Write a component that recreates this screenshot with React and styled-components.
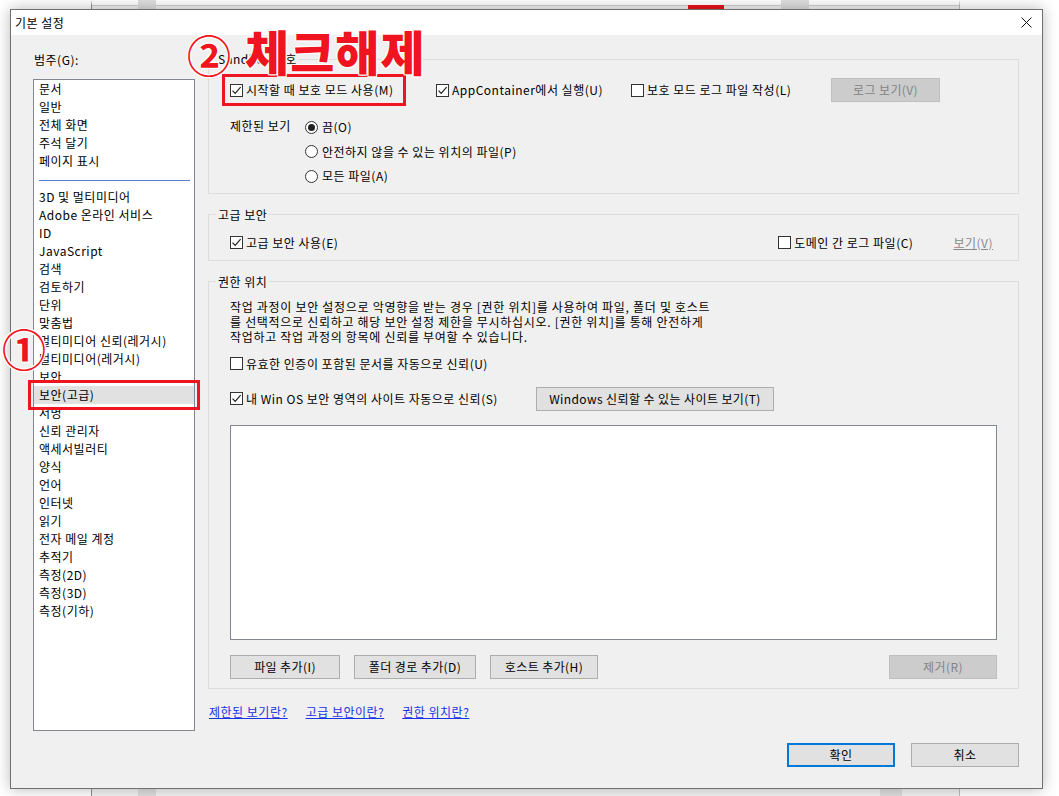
import React from 'react';
import styled, { createGlobalStyle } from 'styled-components';

const GlobalStyle = createGlobalStyle`
    html, body {
        margin: 0;
        padding: 0;
        background: #ffffff;
    }
    body {
        font-family: "Noto Sans CJK KR", "Noto Sans", sans-serif;
        font-size: 12px;
        letter-spacing: 0.5px;
        color: #000;
    }
`;

const categoriesTop = ['문서', '일반', '전체 화면', '주석 달기', '페이지 표시'];
const categoriesBottom = [
    '3D 및 멀티미디어',
    'Adobe 온라인 서비스',
    'ID',
    'JavaScript',
    '검색',
    '검토하기',
    '단위',
    '맞춤법',
    '멀티미디어 신뢰(레거시)',
    '멀티미디어(레거시)',
    '보안',
    '보안(고급)',
    '서명',
    '신뢰 관리자',
    '액세서빌러티',
    '양식',
    '언어',
    '인터넷',
    '읽기',
    '전자 메일 계정',
    '추적기',
    '측정(2D)',
    '측정(3D)',
    '측정(기하)',
];

const CheckBox = ({ checked }) => (
    <Box>
        {checked && (
            <svg width="11" height="11" viewBox="0 0 11 11">
                <path d="M1.5 5.6 L4.2 8.4 L9.6 2.2" fill="none" stroke="#222" strokeWidth="1.2" />
            </svg>
        )}
    </Box>
);

const App = () => {
    return (
        <React.Fragment>
            <GlobalStyle />
            <Desktop>
                <BackWindow>
                    <Chip $left={46} $top={0} $width={18} $height={9} $color={'#dedede'} />
                    <Chip $left={596} $top={5} $width={36} $height={4} $color={'#e8141c'} />
                    <Chip $left={689} $top={0} $width={28} $height={9} $color={'#dedede'} />
                    <Chip $left={46} $top={788} $width={18} $height={8} $color={'#dedede'} />
                    <Chip $left={788} $top={788} $width={22} $height={8} $color={'#dedede'} />
                </BackWindow>

                <Dialog>
                    <TitleBar>
                        <TitleText>기본 설정</TitleText>
                        <CloseButton>
                            <svg width="11" height="11" viewBox="0 0 11 11">
                                <path d="M0.5 0.5 L10.5 10.5 M10.5 0.5 L0.5 10.5" stroke="#111" strokeWidth="1" />
                            </svg>
                        </CloseButton>
                    </TitleBar>

                    <Body>
                        <LeftCol>
                            <CategoryLabel>범주(G):</CategoryLabel>
                            <ListBox>
                                {categoriesTop.map(item => (
                                    <ListItem key={item}>{item}</ListItem>
                                ))}
                                <Separator />
                                {categoriesBottom.map(item => (
                                    <ListItem key={item} $selected={item === '보안(고급)'}>
                                        {item}
                                    </ListItem>
                                ))}
                            </ListBox>
                        </LeftCol>

                        <RightCol>
                            <Group $top={16} $padBottom={4}>
                                <Legend>Sandbox 보호</Legend>
                                <TopRow>
                                    <Check $marked>
                                        <CheckBox checked />
                                        시작할 때 보호 모드 사용(M)
                                    </Check>
                                    <Check>
                                        <CheckBox checked />
                                        AppContainer에서 실행(U)
                                    </Check>
                                    <Check>
                                        <CheckBox />
                                        보호 모드 로그 파일 작성(L)
                                    </Check>
                                    <Button $width={109} disabled>
                                        로그 보기(V)
                                    </Button>
                                </TopRow>
                                <RadioGrid>
                                    <RadioCaption>제한된 보기</RadioCaption>
                                    <Check>
                                        <Radio $on />
                                        끔(O)
                                    </Check>
                                    <Check>
                                        <Radio />
                                        안전하지 않을 수 있는 위치의 파일(P)
                                    </Check>
                                    <Check>
                                        <Radio />
                                        모든 파일(A)
                                    </Check>
                                </RadioGrid>
                            </Group>

                            <Group $top={13} $padTop={8} $padBottom={5}>
                                <Legend>고급 보안</Legend>
                                <SpreadRow>
                                    <Check>
                                        <CheckBox checked />
                                        고급 보안 사용(E)
                                    </Check>
                                    <RightCluster>
                                        <Check>
                                            <CheckBox />
                                            도메인 간 로그 파일(C)
                                        </Check>
                                        <DisabledLink>보기(V)</DisabledLink>
                                    </RightCluster>
                                </SpreadRow>
                            </Group>

                            <Group $top={13} $padTop={9} $padBottom={9}>
                                <Legend>권한 위치</Legend>
                                <Paragraph>
                                    작업 과정이 보안 설정으로 악영향을 받는 경우 [권한 위치]를 사용하여 파일, 폴더 및 호스트
                                    <br />
                                    를 선택적으로 신뢰하고 해당 보안 설정 제한을 무시하십시오. [권한 위치]를 통해 안전하게
                                    <br />
                                    작업하고 작업 과정의 항목에 신뢰를 부여할 수 있습니다.
                                </Paragraph>
                                <PlainRow $top={8}>
                                    <Check>
                                        <CheckBox />
                                        유효한 인증이 포함된 문서를 자동으로 신뢰(U)
                                    </Check>
                                </PlainRow>
                                <PlainRow $top={11}>
                                    <Check $width={306}>
                                        <CheckBox checked />
                                        내 Win OS 보안 영역의 사이트 자동으로 신뢰(S)
                                    </Check>
                                    <Button $width={238}>Windows 신뢰할 수 있는 사이트 보기(T)</Button>
                                </PlainRow>
                                <SiteList />
                                <ButtonRow>
                                    <Button $width={110}>파일 추가(I)</Button>
                                    <Button $width={122}>폴더 경로 추가(D)</Button>
                                    <Button $width={108}>호스트 추가(H)</Button>
                                    <Spacer />
                                    <Button $width={108} disabled>
                                        제거(R)
                                    </Button>
                                </ButtonRow>
                            </Group>

                            <LinkRow>
                                <HelpLink>제한된 보기란?</HelpLink>
                                <HelpLink>고급 보안이란?</HelpLink>
                                <HelpLink>권한 위치란?</HelpLink>
                            </LinkRow>

                            <Footer>
                                <Button $width={108} $primary>
                                    확인
                                </Button>
                                <Button $width={108}>취소</Button>
                            </Footer>
                        </RightCol>
                    </Body>

                    <StepOne>①</StepOne>
                    <StepNote>
                        <StepTwo>②</StepTwo>
                        <NoteText>체크해제</NoteText>
                    </StepNote>
                </Dialog>
            </Desktop>
        </React.Fragment>
    );
};

export default App;

const Desktop = styled.div`
    position: relative;
    width: 1059px;
    height: 796px;
    overflow: hidden;
    background: #ffffff;
`;

const BackWindow = styled.div`
    position: absolute;
    left: 91px;
    top: 0;
    width: 869px;
    height: 796px;
    box-sizing: border-box;
    background: #f3f3f3;
    border-left: 1px solid #8f8f8f;
    border-right: 1px solid #bdbdbd;
    border-top: 5px solid #ffffff;
    box-shadow: inset 0 1px 0 #cfcfcf;
`;

const Chip = styled.div`
    position: absolute;
    left: ${props => props.$left}px;
    top: ${props => props.$top - 5}px;
    width: ${props => props.$width}px;
    height: ${props => props.$height}px;
    background: ${props => props.$color};
`;

const Dialog = styled.div`
    position: absolute;
    left: 10px;
    top: 9px;
    width: 1033px;
    height: 780px;
    box-sizing: border-box;
    border: 1px solid #6f6f6f;
    background: #f0f0f0;
    box-shadow: 0 0 14px rgba(0, 0, 0, 0.28);
    display: flex;
    flex-direction: column;
`;

const TitleBar = styled.div`
    height: 25px;
    flex: none;
    background: #ffffff;
    display: flex;
    align-items: center;
    justify-content: space-between;
    padding: 0 10px 0 4px;
`;

const TitleText = styled.span`
    font-size: 12px;
    line-height: 16px;
`;

const CloseButton = styled.span`
    display: flex;
    align-items: center;
    justify-content: center;
    width: 12px;
    height: 12px;
`;

const Body = styled.div`
    flex: 1;
    display: flex;
    gap: 13px;
    padding: 0 23px 0 22px;
`;

const LeftCol = styled.div`
    width: 162px;
    flex: none;
    padding-top: 17px;
    display: flex;
    flex-direction: column;
`;

const CategoryLabel = styled.div`
    line-height: 16px;
    padding-left: 1px;
`;

const ListBox = styled.div`
    margin-top: 11px;
    height: 652px;
    box-sizing: border-box;
    border: 1px solid #828790;
    background: #ffffff;
`;

const ListItem = styled.div`
    height: 18px;
    line-height: 18px;
    padding-left: 5px;
    white-space: nowrap;
    background: ${props => (props.$selected ? '#e1e1e1' : 'transparent')};
    outline: ${props => (props.$selected ? '3px solid #ee1420' : 'none')};
    outline-offset: 3px;
`;

const Separator = styled.div`
    height: 1px;
    margin: 10px 4px 7px 5px;
    background: #5b7bd5;
`;

const RightCol = styled.div`
    width: 811px;
    flex: none;
    display: flex;
    flex-direction: column;
`;

const Group = styled.fieldset`
    margin: ${props => props.$top}px 0 0 0;
    min-width: 0;
    border: 1px solid #dcdcdc;
    padding: ${props => props.$padTop || 0}px 21px ${props => props.$padBottom}px 21px;
`;

const Legend = styled.legend`
    margin-left: -14px;
    padding: 0 2px;
    line-height: 16px;
    font-size: 12px;
`;

const TopRow = styled.div`
    margin-top: 11px;
    display: grid;
    grid-template-columns: 206px 195px 200px 109px;
    align-items: center;
    height: 24px;
`;

const Check = styled.label`
    display: inline-flex;
    align-items: center;
    gap: 3px;
    height: 20px;
    line-height: 16px;
    white-space: nowrap;
    width: ${props => (props.$width ? `${props.$width}px` : 'auto')};
    justify-self: start;
    ${props =>
        props.$marked &&
        `
        margin-left: -2px;
        padding: 0 6px 0 2px;
        outline: 3px solid #ee1420;
        outline-offset: 3px;
    `}
`;

const Box = styled.span`
    width: 13px;
    height: 13px;
    box-sizing: border-box;
    border: 1px solid #333333;
    background: #ffffff;
    display: inline-flex;
    align-items: center;
    justify-content: center;
    flex: none;
`;

const Radio = styled.span`
    width: 13px;
    height: 13px;
    box-sizing: border-box;
    border: 1px solid #333333;
    border-radius: 50%;
    background: #ffffff;
    display: inline-flex;
    align-items: center;
    justify-content: center;
    flex: none;
    margin-right: 1px;

    &::after {
        content: '';
        width: 7px;
        height: 7px;
        border-radius: 50%;
        background: ${props => (props.$on ? '#222' : 'transparent')};
    }
`;

const RadioGrid = styled.div`
    margin-top: 13px;
    display: grid;
    grid-template-columns: 75px auto;
    grid-auto-rows: 24.5px;
    align-items: center;

    & > label {
        grid-column: 2;
    }
`;

const RadioCaption = styled.span`
    grid-column: 1;
    grid-row: 1;
    line-height: 16px;
    margin-top: -3px;
`;

const Button = styled.button`
    width: ${props => props.$width}px;
    height: 24px;
    box-sizing: border-box;
    padding: 0;
    font-family: inherit;
    font-size: 12px;
    letter-spacing: 0.4px;
    line-height: 16px;
    color: ${props => (props.disabled ? '#838383' : '#000')};
    background: ${props => (props.disabled ? '#cccccc' : '#e1e1e1')};
    border: ${props =>
        props.$primary ? '2px solid #0078d7' : props.disabled ? '1px solid #bfbfbf' : '1px solid #adadad'};
    flex: none;
`;

const SpreadRow = styled.div`
    display: flex;
    align-items: center;
    justify-content: space-between;
    height: 24px;
`;

const RightCluster = styled.div`
    display: flex;
    align-items: center;
    gap: 40px;
    padding-right: 4px;
`;

const DisabledLink = styled.span`
    color: #8a8a8a;
    text-decoration: underline;
    line-height: 16px;
`;

const Paragraph = styled.p`
    margin: 0;
    line-height: 15px;
    letter-spacing: 0.7px;
    white-space: nowrap;
`;

const PlainRow = styled.div`
    margin-top: ${props => props.$top}px;
    display: flex;
    align-items: center;
    height: 24px;
`;

const SiteList = styled.div`
    margin-top: 14px;
    height: 215px;
    box-sizing: border-box;
    border: 1px solid #828790;
    background: #ffffff;
`;

const ButtonRow = styled.div`
    margin-top: 15px;
    display: flex;
    gap: 14px;
`;

const Spacer = styled.div`
    flex: 1;
`;

const LinkRow = styled.div`
    margin-top: 15px;
    display: flex;
    gap: 18px;
    padding-left: 1px;
`;

const HelpLink = styled.a`
    color: #1a32e6;
    text-decoration: underline;
    line-height: 16px;
    cursor: pointer;
`;

const Footer = styled.div`
    margin-top: 23px;
    display: flex;
    justify-content: flex-end;
    gap: 16px;
`;

const redMark = `
    font-weight: 700;
    line-height: 1;
    letter-spacing: 0;
    color: #f01420;
    text-shadow: 1px 1px 0 #fff, -1px -1px 0 #fff, 1px -1px 0 #fff, -1px 1px 0 #fff, 0 0 2px #fff;
`;

const StepOne = styled.div`
    position: absolute;
    left: -9px;
    top: 316px;
    font-size: 44px;
    ${redMark}
`;

const StepNote = styled.div`
    position: absolute;
    left: 176px;
    top: 16px;
    display: flex;
    align-items: flex-start;
    gap: 14px;
`;

const StepTwo = styled.span`
    margin-top: 6px;
    font-size: 44px;
    ${redMark}
`;

const NoteText = styled.span`
    font-size: 48px;
    font-weight: 900;
    line-height: 1;
    letter-spacing: 1px;
    color: #f01420;
    text-shadow: 1px 1px 0 #fff, -1px -1px 0 #fff, 1px -1px 0 #fff, -1px 1px 0 #fff, 0 0 2px #fff;
`;
